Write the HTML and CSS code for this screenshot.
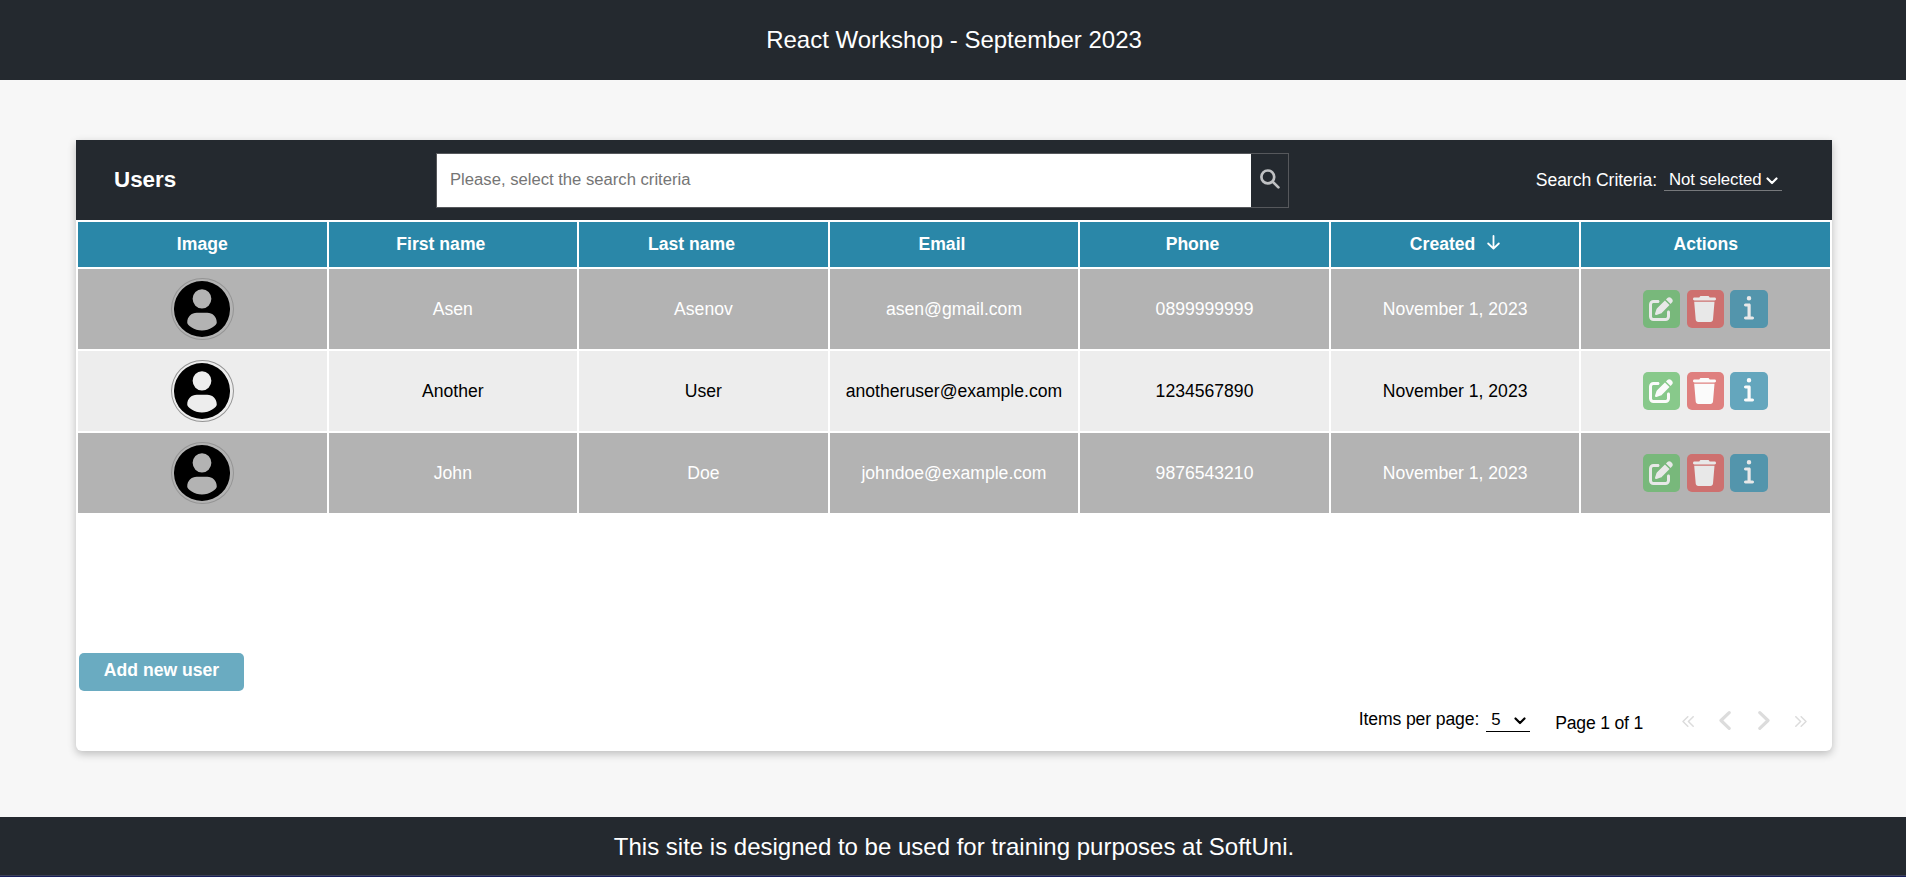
FILE: index.html
```html
<!DOCTYPE html>
<html lang="en">
<head>
<meta charset="utf-8">
<title>React Workshop</title>
<link rel="stylesheet" href="styles.css">
</head>
<body>
<svg class="sprite" aria-hidden="true">
  <symbol id="avatar" viewBox="0 0 55 55"><path fill-rule="evenodd" d="M27.500 0a27.500 27.500 0 1 0 0 55a27.500 27.500 0 1 0 0-55ZM27.500 8a9.200 9.500 0 1 1 0 19a9.200 9.500 0 1 1 0-19ZM22.500 31.200h10c5.500 0 9.500 4 9.500 9.500c0 3-7 7.800-14.500 7.800s-14.500-4.800-14.500-7.800c0-5.500 4-9.500 9.500-9.500Z"/></symbol>
  <symbol id="edit" viewBox="0 0 512 512"><path d="M471.600 21.700c-21.900-21.900-57.300-21.900-79.200 0L362.300 51.700l97.900 97.900 30.100-30.100c21.900-21.900 21.900-57.300 0-79.200L471.600 21.700zm-299.200 220c-6.100 6.100-10.800 13.600-13.500 21.900l-29.600 88.800c-2.900 8.600-.6 18.100 5.800 24.600s15.900 8.700 24.600 5.800l88.800-29.600c8.200-2.700 15.700-7.400 21.900-13.500L437.700 172.300 339.700 74.300 172.400 241.700zM96 64C43 64 0 107 0 160V416c0 53 43 96 96 96H352c53 0 96-43 96-96V320c0-17.700-14.300-32-32-32s-32 14.300-32 32v96c0 17.700-14.300 32-32 32H96c-17.700 0-32-14.300-32-32V160c0-17.700 14.300-32 32-32h96c17.700 0 32-14.300 32-32s-14.300-32-32-32H96z"/></symbol>
  <symbol id="trash" viewBox="0 0 23 26"><path d="M8 0h7c.8 0 1.300.6 1.700 1.500H21.500c2 0 2 2.900 0 2.900H1.500c-2 0-2-2.900 0-2.900H6.300C6.700.6 7.200 0 8 0ZM1.200 5.700H21.500L20 23.600c-.1 1.400-1.200 2.400-2.600 2.400H5.300c-1.400 0-2.500-1-2.600-2.400Z"/></symbol>
  <symbol id="info" viewBox="0 0 10 24"><path d="M5 0a2.250 2.250 0 1 1 0 4.500a2.250 2.250 0 1 1 0-4.500ZM1.500 7.600h3.700c.9 0 1.500.6 1.500 1.500v11.500h1.800c2 0 2 3 0 3h-7c-2 0-2-3 0-3h2v-10h-2c-2 0-2-3 0-3Z"/></symbol>
  <symbol id="search" viewBox="0 0 20 20"><path class="lens" d="M14.200 7.900a6.400 6.400 0 1 1-12.800 0a6.400 6.400 0 1 1 12.800 0ZM12.600 12.600l5.800 5.800"/></symbol>
  <symbol id="down" viewBox="0 0 13 15"><path class="arrow" d="M6.500 1v12.500M1.200 8.500l5.300 5.200 5.300-5.200"/></symbol>
  <symbol id="caret" viewBox="0 0 12 8"><path class="stroke" d="M1.500 1.500l4.500 4.500 4.500-4.500"/></symbol>
  <symbol id="double" viewBox="0 0 12 11"><path class="thin" d="M5.800.7L1 5.500l4.800 4.800M11.200.7L6.400 5.500l4.800 4.800"/></symbol>
  <symbol id="single" viewBox="0 0 12 19"><path class="thick" d="M10.200 1.700L2 9.500l8.200 7.800"/></symbol>
</svg>
<header class="site-header"><h1>React Workshop - September 2023</h1></header>
<main class="main">
  <section class="card">
    <form class="search">
      <h2>Users</h2>
      <div class="search-box">
        <input type="text" placeholder="Please, select the search criteria">
        <button type="button" class="search-btn"><svg><use href="#search"/></svg></button>
      </div>
      <div class="criteria"><span>Search Criteria:</span><span class="criteria-select">Not selected<svg><use href="#caret"/></svg></span></div>
    </form>
    <div class="table-wrap">
      <table>
        <thead><tr><th>Image</th><th class="sortable">First name</th><th class="sortable">Last name</th><th class="sortable">Email</th><th class="sortable">Phone</th><th>Created<svg class="sort"><use href="#down"/></svg></th><th>Actions</th></tr></thead>
        <tbody>
          <tr><td><span class="avatar"><svg><use href="#avatar"/></svg></span></td><td>Asen</td><td>Asenov</td><td>asen@gmail.com</td><td>0899999999</td><td>November 1, 2023</td><td><div class="actions"><button class="edit"><svg><use href="#edit"/></svg></button><button class="delete"><svg><use href="#trash"/></svg></button><button class="info"><svg><use href="#info"/></svg></button></div></td></tr>
          <tr><td><span class="avatar"><svg><use href="#avatar"/></svg></span></td><td>Another</td><td>User</td><td>anotheruser@example.com</td><td>1234567890</td><td>November 1, 2023</td><td><div class="actions"><button class="edit"><svg><use href="#edit"/></svg></button><button class="delete"><svg><use href="#trash"/></svg></button><button class="info"><svg><use href="#info"/></svg></button></div></td></tr>
          <tr><td><span class="avatar"><svg><use href="#avatar"/></svg></span></td><td>John</td><td>Doe</td><td>johndoe@example.com</td><td>9876543210</td><td>November 1, 2023</td><td><div class="actions"><button class="edit"><svg><use href="#edit"/></svg></button><button class="delete"><svg><use href="#trash"/></svg></button><button class="info"><svg><use href="#info"/></svg></button></div></td></tr>
        </tbody>
      </table>
    </div>
    <button class="add">Add new user</button>
    <div class="pagination">
      <span class="limit">Items per page:</span><span class="limit-select">5<svg><use href="#caret"/></svg></span>
      <span class="page">Page 1 of 1</span>
      <span class="pager"><svg class="dbl"><use href="#double"/></svg><svg class="sgl"><use href="#single"/></svg><svg class="sgl flip"><use href="#single"/></svg><svg class="dbl flip"><use href="#double"/></svg></span>
    </div>
  </section>
</main>
<footer class="site-footer"><p>This site is designed to be used for training purposes at SoftUni.</p></footer>
</body>
</html>
```
FILE: styles.css
```css
* { box-sizing: border-box; }
html { overflow: hidden; }
body {
  margin: 0;
  width: 1908px;
  height: 877px;
  display: flex;
  flex-direction: column;
  background: #f7f7f7;
  font-family: "Liberation Sans", Arial, sans-serif;
  font-size: 17.6px;
}
h1, h2, p { margin: 0; }
button { border: 0; padding: 0; font: inherit; }
svg { fill: currentColor; flex: none; }
.sprite { position: absolute; width: 0; height: 0; }
.stroke, .thin, .thick, .lens, .arrow { fill: none; stroke: currentColor; stroke-width: 2.2; stroke-linecap: round; stroke-linejoin: round; }
.thin { stroke-width: 1.5; }
.thick { stroke-width: 3.2; }
.lens { stroke-width: 2.7; }
.arrow { stroke-width: 1.8; }
.site-header {
  height: 80px;
  display: flex;
  align-items: center;
  justify-content: center;
  background: #24292f;
  color: #fff;
}
.site-header h1 { font-size: 24px; font-weight: 400; }
.main { flex: 1; padding: 60px 76px 0; }
.card {
  height: 611px;
  display: flex;
  flex-direction: column;
  background: #fff;
  border-radius: 0 0 6px 6px;
  box-shadow: 0 3px 8px rgba(0, 0, 0, .24);
}
.search {
  height: 80px;
  display: flex;
  align-items: center;
  padding: 0 50px 0 38px;
  background: #24292f;
  color: #fff;
}
.search h2 { width: 322px; font-size: 22.4px; }
.search-box { display: flex; width: 853px; height: 55px; border: 1px solid #56585c; }
.search-box input {
  flex: 1;
  border: 0;
  padding: 0 12px 0 13px;
  font: 16.65px "Liberation Sans", Arial, sans-serif;
}
.search-box input::placeholder { color: #757575; }
.search-btn { width: 37px; display: grid; place-items: center; padding-bottom: 2px; background: #24292f; color: #c0c1c3; }
.search-btn svg { width: 20px; height: 20px; }
.criteria { margin-left: auto; display: flex; align-items: center; gap: 7px; letter-spacing: -.06px; }
.criteria-select {
  width: 118px;
  height: 23px;
  display: flex;
  align-items: center;
  justify-content: space-between;
  margin-bottom: 1px;
  padding: 1px 4px 0 5px;
  border-bottom: 1px solid #77797c;
  font-size: 16.8px;
  white-space: nowrap;
}
.criteria-select svg { width: 12px; height: 8px; margin-top: 3px; }
.table-wrap { height: 430px; }
table { width: 100%; table-layout: fixed; border-spacing: 2px; }
th, td { padding: 0; text-align: center; }
th { height: 45px; background: #2a87a8; color: #fff; }
.sortable { padding-right: 24px; }
.sort { width: 13px; height: 15px; margin-left: 12px; }
td { height: 80px; background: #b3b3b3; color: #fff; }
tr:nth-child(even) td { background: #ededed; color: #000; }
.avatar {
  width: 63px;
  height: 62px;
  display: grid;
  place-items: center;
  margin: auto;
  border: 1px solid #959595;
  border-radius: 50%;
  color: #000;
}
.avatar svg { width: 56px; height: 56px; }
.actions { display: flex; justify-content: center; gap: 6px; padding-right: 1px; }
.actions button { width: 37px; height: 38px; display: grid; place-items: center; border-radius: 5px; color: #e8e8e8; }
.actions svg { width: 24px; height: 24px; }
.actions .delete { margin-left: 1px; }
.actions .delete svg { width: 23px; height: 26px; margin-right: 2px; }
.actions .info { width: 38px; }
.actions .info svg { width: 10px; margin-bottom: 3px; }
.edit { background: #78b87b; }
.delete { background: #ce706f; }
.info { background: #5395ac; }
tr:nth-child(even) button { color: #fbfbfb; }
tr:nth-child(even) .edit { background: #88c98b; }
tr:nth-child(even) .delete { background: #df807f; }
tr:nth-child(even) .info { background: #64a6bd; }
.add {
  width: 165px;
  height: 38px;
  margin: 3px 0 0 3px;
  padding-bottom: 3px;
  border-radius: 5px;
  background: #6aabc1;
  color: #fff;
  font-weight: 700;
}
.pagination { height: 60px; display: flex; align-items: center; padding-right: 25px; justify-content: flex-end; letter-spacing: -.12px; }
.limit { margin-bottom: 3px; }
.limit-select {
  width: 44px;
  height: 22px;
  display: flex;
  align-items: center;
  justify-content: space-between;
  margin: 0 25px 0 7px;
  padding: 0 4px 1px 5px;
  border-bottom: 1px solid #000;
  font-size: 16.8px;
}
.limit-select svg { width: 12px; height: 8px; margin-top: 2px; }
.page { padding-top: 4px; letter-spacing: -.2px; }
.pager { display: flex; align-items: center; margin-left: 39px; gap: 25px; color: #dcdcdc; }
.dbl { width: 12px; height: 11px; }
.sgl { width: 12px; height: 19px; margin-bottom: 1px; }
.sgl.flip { margin-left: 2px; }
.flip { transform: scaleX(-1); }
.site-footer {
  height: 60px;
  display: flex;
  justify-content: center;
  align-items: center;
  background: #24292f;
  color: #fff;
  font-size: 24px;
  border-bottom: 1px solid #181f5a;
  box-shadow: inset 0 -1px #3c4058;
}
```
